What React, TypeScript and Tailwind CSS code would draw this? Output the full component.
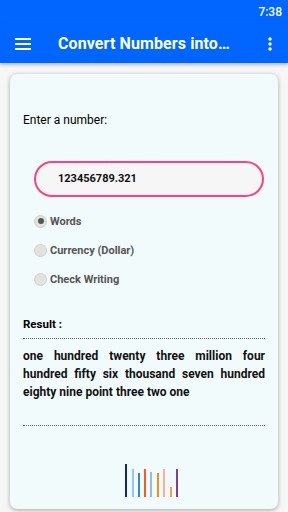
import React from 'react'

const bars = [
  { x: 0, top: 0, color: '#0d2a7a' },
  { x: 7, top: 5, color: '#90c8f5' },
  { x: 13, top: 9, color: '#3a86c0' },
  { x: 19, top: 5, color: '#ff5722' },
  { x: 25, top: 8, color: '#9bb8ea' },
  { x: 32, top: 9, color: '#f0901a' },
  { x: 38, top: 5, color: '#f7b0a8' },
  { x: 45, top: 23, color: '#ffa040' },
  { x: 51, top: 5, color: '#7b3fa0' },
]

const resultLines = [
  'one hundred twenty three million four',
  'hundred fifty six thousand seven hundred',
  'eighty nine point three two one',
]

function Radio({ label, checked }: { label: string; checked?: boolean }) {
  return (
    <div className="flex items-center gap-[3px] h-[29px]">
      <div className="w-[13px] h-[13px] rounded-full bg-[#e2e2e2] border border-[#d0d0d0] flex items-center justify-center -mt-[3px]">
        {checked && <div className="w-[6px] h-[6px] rounded-full bg-[#555]" />}
      </div>
      <span className="text-[11px] font-bold text-[#555]">{label}</span>
    </div>
  )
}

export default function App() {
  return (
    <div className="w-[288px] h-[512px] bg-[#f6f6f6] flex flex-col overflow-hidden" style={{ fontFamily: 'Roboto, "Liberation Sans", sans-serif' }}>
      <div className="bg-[#0066ff] h-[24px] flex items-center justify-end pr-[6px]">
        <span className="text-white text-[12px] font-medium">7:38</span>
      </div>
      <div className="bg-[#0066ff] h-[39px] flex items-center shadow-[0_2px_3px_rgba(0,0,0,0.25)] relative z-10">
        <svg width="16" height="12" viewBox="0 0 16 12" className="ml-[15px]">
          <rect y="0" width="16" height="2" fill="white" />
          <rect y="5" width="16" height="2" fill="white" />
          <rect y="10" width="16" height="2" fill="white" />
        </svg>
        <span className="ml-[27px] text-white text-[16px] font-bold tracking-[0.1px]">Convert Numbers into…</span>
        <svg width="4" height="14" viewBox="0 0 4 14" className="ml-auto mr-[16px]">
          <circle cx="2" cy="2" r="1.7" fill="white" />
          <circle cx="2" cy="7" r="1.7" fill="white" />
          <circle cx="2" cy="12" r="1.7" fill="white" />
        </svg>
      </div>
      <div className="flex-1 px-[10px] pt-[11px] pb-[3px]">
        <div className="h-full bg-[#f2fbfc] rounded-[7px] shadow-[0_1px_4px_rgba(0,0,0,0.35)] px-[13px] pt-[37px] flex flex-col">
          <div className="text-[12px] text-black">Enter a number:</div>
          <div className="mt-[32px] ml-[11px] mr-[1px] h-[36px] rounded-full border-2 border-[#ff4081] bg-[#f6f6f6] flex items-center pl-[22px]">
            <span className="text-[11px] font-bold text-[#111]">123456789.321</span>
          </div>
          <div className="mt-[11px] ml-[11px] flex flex-col">
            <Radio label="Words" checked />
            <Radio label="Currency (Dollar)" />
            <Radio label="Check Writing" />
          </div>
          <div className="mt-[21px] text-[11.5px] font-bold text-black">Result :</div>
          <div className="mt-[5px] border-t border-dotted border-[#666]" />
          <div className="mt-[8px] text-[12px] font-bold text-[#111] leading-[18px]">
            {resultLines.map((l, i) => (
              <div key={i} className={i < resultLines.length - 1 ? 'text-justify [text-align-last:justify]' : ''}>
                {l}
              </div>
            ))}
          </div>
          <div className="mt-[24px] border-t border-dotted border-[#666]" />
          <div className="mt-[38px] relative h-[33px] w-[54px] mx-auto translate-x-[8px]">
            {bars.map((b, i) => (
              <div
                key={i}
                className="absolute bottom-0 w-[2px]"
                style={{ left: b.x, top: b.top, background: b.color }}
              />
            ))}
          </div>
        </div>
      </div>
    </div>
  )
}
